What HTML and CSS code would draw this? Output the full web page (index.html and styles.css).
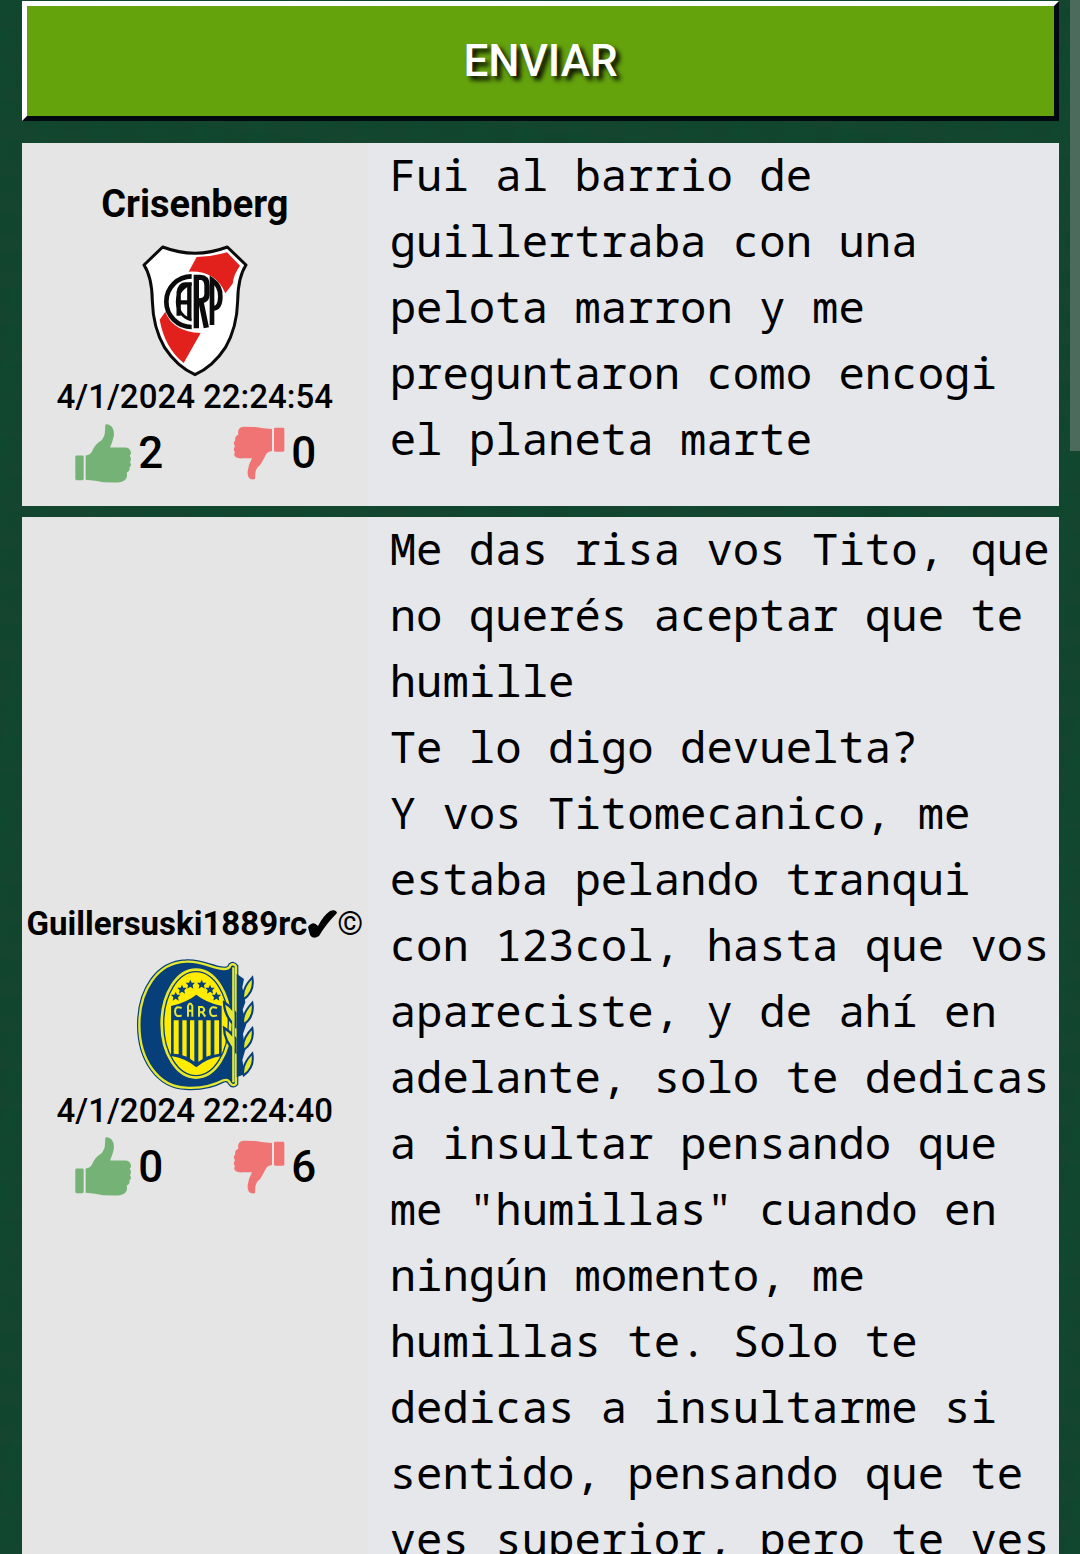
FILE: index.html
```html
<!DOCTYPE html>
<html lang="es">
<head>
<meta charset="utf-8">
<meta name="viewport" content="width=device-width, initial-scale=1">
<title>Comentarios</title>
<link rel="stylesheet" href="styles.css">
</head>
<body>
<svg class="sprite" aria-hidden="true">
  <symbol id="thumb-up" viewBox="50 20 171 176">
    <rect x="51" y="114" width="25" height="74" rx="4"/>
    <path d="M82 114 Q96 112 101 102 Q111 79 128 70 Q140 58 140 40 L141 21 Q150 19 160 27 Q169 38 166 58 Q162 76 155 90 L200 90 Q214 91 217 101 Q220 110 214 114 Q221 124 215 134 Q222 144 213 150 Q217 160 205 166 Q209 181 199 188 Q190 195 170 195 L135 194 Q112 189 82 187Z"/>
  </symbol>
  <symbol id="thumb-down" viewBox="520 28 154 162">
    <rect x="642" y="33" width="31" height="72" rx="4"/>
    <path d="M636 37 Q608 35 587 31 L550 30 Q531 32 535 54 Q523 59 526 71 Q517 79 525 88 Q518 100 525 107 Q519 115 528 122 Q533 126 547 125 L576 125 Q566 143 563 164 Q562 180 570 186 Q579 190 585 187 L586 168 Q589 153 600 146 Q608 132 616 117 Q622 104 636 103Z"/>
  </symbol>
</svg>
<main class="page">
  <button class="send" type="submit">ENVIAR</button>

  <article class="comment">
    <div class="author">
      <h2 class="name">Crisenberg</h2>
      <svg class="crest" viewBox="0 0 390 396" role="img" aria-label="River Plate">
        <path d="M98 6 Q195 43 292 6 L348 60 Q324 96 323 168 Q321 248 286 308 Q249 365 195 389 Q141 365 104 308 Q69 248 67 168 Q66 96 42 60Z" fill="#fff" stroke="#0b0b0b" stroke-width="9" stroke-linejoin="round"/>
        <path d="M200 36 Q248 35 291 22 L330 62 Q310 90 308 116 L286 145 Q257 76 176 80Z M106 200 Q128 260 212 264 L161 354 Q104 308 89 224Z" fill="#e3211c"/>
        <g fill="none" stroke="#0b0b0b">
          <path d="M185 94 A76 76 0 0 0 185 246" stroke-width="14"/>
          <path d="M185 116 A56 56 0 0 0 185 225" stroke-width="9"/>
          <path d="M146 212 V142 Q150 118 166 118 H178 V220 M146 172 H178" stroke-width="13"/>
          <path d="M199 250 V97 H211 Q231 97 231 122 V147 Q231 168 206 168 M213 170 L229 248" stroke-width="16"/>
          <path d="M246 240 V105 Q272 123 271 154 Q271 190 249 191" stroke-width="14"/>
        </g>
      </svg>
      <time class="date">4/1/2024 22:24:54</time>
      <div class="votes">
        <button class="vote up" type="button" aria-label="Me gusta"><svg class="icon-up"><use href="#thumb-up"/></svg>2</button>
        <button class="vote down" type="button" aria-label="No me gusta"><svg class="icon-down"><use href="#thumb-down"/></svg>0</button>
      </div>
    </div>
    <p class="text">Fui al barrio de guillertraba con una pelota marron y me preguntaron como encogi el planeta marte</p>
  </article>

  <article class="comment">
    <div class="author">
      <h2 class="name small">Guillersuski1889rc<span class="mark"><svg class="check" viewBox="0 0 30 28" role="img" aria-label="✔"><path d="M1 17 Q6 10 11 16 Q16 6 23 1 Q29 -1 30 3 Q19 14 12 26 Q6 30 3 25Z"/></svg>©</span></h2>
      <svg class="crest" viewBox="0 0 390 396" role="img" aria-label="Rosario Central">
        <defs>
          <path id="big-c" d="M168 8 C213 4 246 28 282 30 Q298 30 301 19 Q310 11 318 22 V374 Q309 384 300 372 Q295 359 280 364 C249 380 213 389 168 386 C83 383 28 300 28 198 C28 92 83 11 168 8Z"/>
          <path id="star" d="M0-14L4-5L14-5L7 3L9 13L0 7L-9 13L-7 3L-14-5L-4-5Z"/>
          <path id="leaf" d="M2 36 Q-6 6 28-30 Q36 12 2 36Z"/>
        </defs>
        <use href="#big-c" fill="#063f79" stroke="#063f79" stroke-width="14"/>
        <use href="#big-c" fill="none" stroke="#e5e833" stroke-width="7"/>
        <path d="M320 44 L342 60 L337 85 L346 130 L338 152 L349 196 L339 225 L346 272 L337 303 L345 345 L320 355Z" fill="#063f79"/>
        <g fill="#e5e833" stroke="#063f79" stroke-width="6">
          <use href="#leaf" x="339" y="85"/><use href="#leaf" x="339" y="161"/><use href="#leaf" x="339" y="237"/><use href="#leaf" x="339" y="313"/>
        </g>
        <ellipse cx="198" cy="194" rx="104" ry="163" fill="#ffec00" stroke="#e5e833" stroke-width="6"/>
        <ellipse cx="198" cy="194" rx="97" ry="156" fill="none" stroke="#063f79" stroke-width="4"/>
        <path d="M282 130 Q282 170 316 202 V162 Q302 142 282 130Z M282 206 Q282 246 316 278 V238 Q302 218 282 206Z" fill="#e5e833" stroke="#063f79" stroke-width="7"/>
        <path d="M310 25 V370" stroke="#e5e833" stroke-width="7"/>
        <path d="M123 141 Q171 130 199 107 Q227 130 275 141 V291 Q230 298 199 325 Q168 298 123 291Z" fill="#063f79"/>
        <path d="M131 184 H146 V286 L131 284Z M157 184 H170 V293 L157 289Z M180 184 H193 V308 L180 299Z M205 184 H218 V300 L205 309Z M229 184 H242 V289 L229 293Z M253 184 H267 V284 L253 287Z" fill="#ffec00"/>
        <path d="M155 147 Q136 139 135 157 Q136 177 155 169 M174 173 V141 Q180 126 187 141 V173 M174 155 H187 M207 173 V144 H217 Q229 152 217 160 H207 M217 160 L226 173 M261 147 Q241 139 240 157 Q241 177 261 169" fill="none" stroke="#e5e833" stroke-width="6"/>
        <g fill="#063f79"><use href="#star" x="137" y="112"/><use href="#star" x="156" y="91"/><use href="#star" x="181" y="76"/><use href="#star" x="215" y="76"/><use href="#star" x="240" y="91"/><use href="#star" x="259" y="112"/></g>
      </svg>
      <time class="date">4/1/2024 22:24:40</time>
      <div class="votes">
        <button class="vote up" type="button" aria-label="Me gusta"><svg class="icon-up"><use href="#thumb-up"/></svg>0</button>
        <button class="vote down" type="button" aria-label="No me gusta"><svg class="icon-down"><use href="#thumb-down"/></svg>6</button>
      </div>
    </div>
    <p class="text">Me das risa vos Tito, que no querés aceptar que te humille
Te lo digo devuelta?
Y vos Titomecanico, me estaba pelando tranqui con 123col, hasta que vos apareciste, y de ahí en adelante, solo te dedicas a insultar pensando que me "humillas" cuando en ningún momento, me humillas te. Solo te dedicas a insultarme si sentido, pensando que te ves superior, pero te ves</p>
  </article>
</main>
<div class="scroll-thumb" aria-hidden="true"></div>
</body>
</html>
```
FILE: styles.css
```css
* {
  box-sizing: border-box;
}

body {
  margin: 0;
  height: 100vh;
  overflow: hidden;
  background:
    repeating-linear-gradient(7deg, rgba(40, 70, 50, 0.12) 0 9px, transparent 22px 37px),
    repeating-linear-gradient(98deg, rgba(0, 80, 50, 0.14) 0 11px, transparent 31px 53px),
    #12452e;
  color: #000;
  font-family: Roboto, sans-serif;
}

.sprite {
  display: none;
}

.page {
  padding: 1px 21px 0 22px;
}

.send {
  display: block;
  width: 100%;
  height: 120px;
  margin-bottom: 22px;
  border: 5px solid;
  border-color: #fff #020810 #020810 #fff;
  background: #65a30d;
  color: #fff;
  font: 500 44px/66px Roboto, sans-serif;
  text-shadow: 4px 4px 5px #000;
}

.comment {
  display: grid;
  grid-template-columns: 1fr 2fr;
  margin-bottom: 11px;
  background: #e5e7eb;
}

.author {
  display: flex;
  flex-direction: column;
  align-items: center;
  justify-content: center;
  min-width: 0;
  padding: 19px 0 16px;
  background: #e5e5e5;
}

.name {
  display: flex;
  margin: 0;
  padding: 16px 0;
  font-size: 38px;
  line-height: 50px;
  font-weight: 700;
  white-space: nowrap;
}

.name.small {
  font-size: 33px;
  line-height: 38px;
}

.mark {
  display: flex;
  align-items: center;
  font-weight: 400;
}

.check {
  width: 30px;
  height: 28px;
}

.crest {
  width: 130px;
  height: 132px;
}

.date {
  font-size: 33px;
  line-height: 40px;
  font-weight: 500;
}

.votes {
  display: flex;
  gap: 70px;
  height: 72px;
  padding-left: 2px;
}

.vote {
  display: flex;
  align-items: center;
  gap: 6px;
  padding: 0;
  border: 0;
  background: none;
  color: #000;
  font: 500 44px/66px Roboto, sans-serif;
}

.icon-up {
  width: 57px;
  height: 59px;
  fill: #74b276;
}

.icon-down {
  width: 52px;
  height: 54px;
  fill: #f07474;
}

.comment .author {
  min-height: 363px;
}

.text {
  min-width: 0;
  margin: -2px 0 0;
  padding-left: 22px;
  font-family: "Droid Sans Mono", "Noto Sans Mono", "DejaVu Sans Mono", monospace;
  font-size: 44px;
  line-height: 66px;
  white-space: pre-wrap;
}

.scroll-thumb {
  position: fixed;
  top: 0;
  right: 0;
  width: 10px;
  height: 29vh;
  background: #4c6b5d;
}
```
